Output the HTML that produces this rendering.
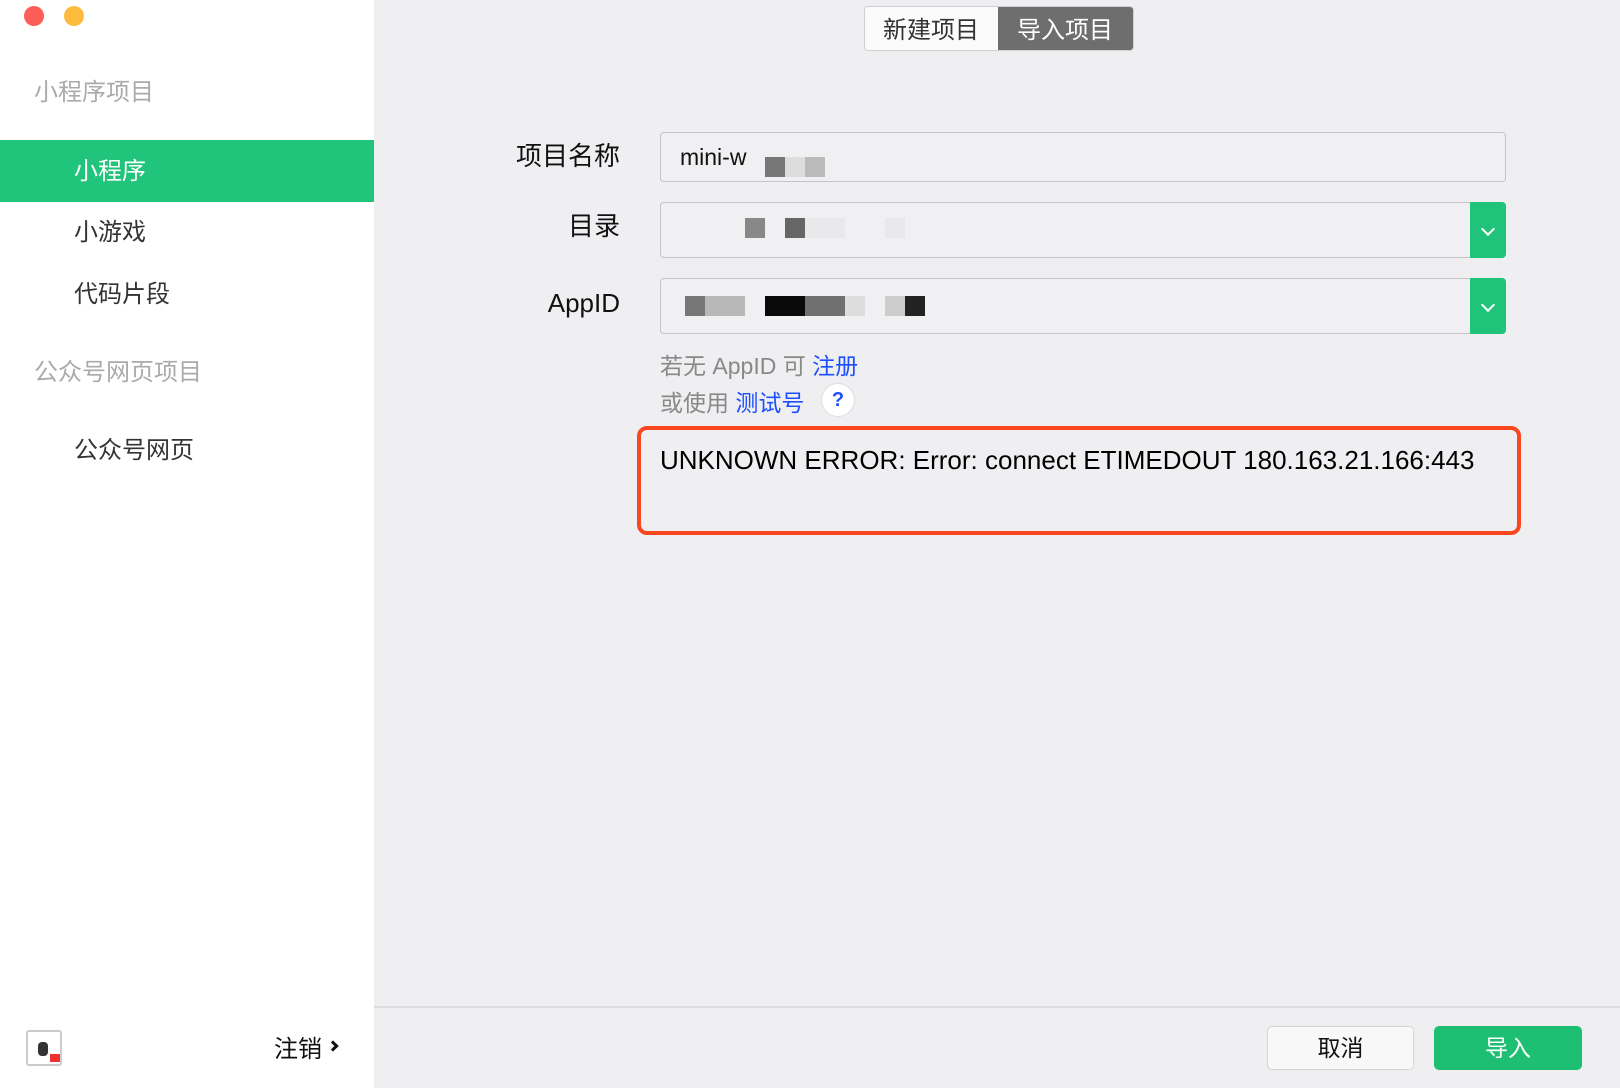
<!DOCTYPE html>
<html><head><meta charset="utf-8"><style>
*{margin:0;padding:0;box-sizing:border-box}
body{width:1620px;height:1088px;position:relative;background:#efeff2;font-family:"Liberation Sans","Noto Sans CJK SC",sans-serif;overflow:hidden}
.a{position:absolute;white-space:nowrap}
.side{position:absolute;left:0;top:0;width:374px;height:1088px;background:#fff}
.dot{position:absolute;width:20px;height:20px;border-radius:50%;top:6px}
.lbl{position:absolute;right:1000px;font-size:26px;color:#111;line-height:30px}
.box{position:absolute;left:660px;width:846px;border:1px solid #c4c4c6;border-radius:4px;background:#f0f0f2}
.gb{position:absolute;right:-1px;top:-1px;bottom:-1px;width:36px;background:#1fc47a;border-radius:0 4px 4px 0}
.gb:after{content:"";position:absolute;left:13px;top:50%;margin-top:-6px;width:8px;height:8px;border-right:2.5px solid #fff;border-bottom:2.5px solid #fff;transform:rotate(45deg)}
.px{position:absolute;height:20px}
</style></head><body>
<div class="side">
<div class="dot" style="left:24px;background:#fd5d57"></div>
<div class="dot" style="left:64px;background:#febb3b"></div>
<div class="a" style="left:34px;top:72px;font-size:24px;color:#aaa">小程序项目</div>
<div style="position:absolute;left:0;top:140px;width:374px;height:62px;background:#20c47a"></div>
<div class="a" style="left:74px;top:151px;font-size:24px;color:#fff">小程序</div>
<div class="a" style="left:74px;top:212px;font-size:24px;color:#333">小游戏</div>
<div class="a" style="left:74px;top:274px;font-size:24px;color:#333">代码片段</div>
<div class="a" style="left:34px;top:352px;font-size:24px;color:#aaa">公众号网页项目</div>
<div class="a" style="left:74px;top:430px;font-size:24px;color:#333">公众号网页</div>
<div style="position:absolute;left:26px;top:1030px;width:36px;height:36px;border:2px solid #ccc;border-radius:3px;background:#fff">
<div style="position:absolute;left:10px;top:10px;width:10px;height:14px;background:#333;border-radius:4px"></div>
<div style="position:absolute;left:22px;top:22px;width:10px;height:8px;background:#e33"></div></div>
<div class="a" style="left:274px;top:1029px;font-size:24px;color:#111">注销</div>
<div style="position:absolute;left:329px;top:1042px;width:8px;height:8px;border-right:3px solid #111;border-top:3px solid #111;transform:rotate(45deg)"></div>
</div>
<div style="position:absolute;left:864px;top:6px;width:270px;height:45px;border:1px solid #d0d0d2;border-radius:4px;background:#fbfbfb;overflow:hidden">
<div class="a" style="left:18px;top:3px;font-size:24px;color:#333">新建项目</div>
<div style="position:absolute;left:133px;top:0;right:0;bottom:0;background:#6e6e6e"></div>
<div class="a" style="left:152px;top:3px;font-size:24px;color:#fff">导入项目</div>
</div>
<div class="lbl" style="top:141px">项目名称</div>
<div class="lbl" style="top:211px">目录</div>
<div class="lbl" style="top:288px">AppID</div>
<div class="box" style="top:132px;height:50px"><div class="a" style="left:19px;top:11px;font-size:23px;color:#111">mini-w</div>
<div class="px" style="left:104px;top:24px;width:20px;background:#777"></div><div class="px" style="left:124px;top:24px;width:20px;background:#ddd"></div><div class="px" style="left:144px;top:24px;width:20px;background:#bbb"></div></div>
<div class="box" style="top:202px;height:56px"><div class="gb"></div>
<div class="px" style="left:84px;top:15px;width:20px;background:#888"></div><div class="px" style="left:124px;top:15px;width:20px;background:#666"></div><div class="px" style="left:144px;top:15px;width:40px;background:#e9e9eb"></div><div class="px" style="left:224px;top:15px;width:20px;background:#e9e9eb"></div></div>
<div class="box" style="top:278px;height:56px"><div class="gb"></div>
<div class="px" style="left:24px;top:17px;width:20px;background:#777"></div><div class="px" style="left:44px;top:17px;width:40px;background:#b8b8b8"></div>
<div class="px" style="left:104px;top:17px;width:40px;background:#0a0a0a"></div><div class="px" style="left:144px;top:17px;width:40px;background:#707070"></div><div class="px" style="left:184px;top:17px;width:20px;background:#ddd"></div>
<div class="px" style="left:224px;top:17px;width:20px;background:#ccc"></div><div class="px" style="left:244px;top:17px;width:20px;background:#222"></div></div>
<div class="a" style="left:660px;top:347px;font-size:23px;color:#888">若无 AppID 可 <span style="color:#1d4fff">注册</span></div>
<div class="a" style="left:660px;top:384px;font-size:23px;color:#888">或使用 <span style="color:#1d4fff">测试号</span></div>
<div style="position:absolute;left:821px;top:383px;width:34px;height:34px;border-radius:50%;background:#fff;border:1px solid #ddd;color:#1d4fff;font-size:20px;font-weight:bold;text-align:center;line-height:32px">?</div>
<div style="position:absolute;left:637px;top:426px;width:884px;height:109px;border:4px solid #fa4721;border-radius:10px"></div>
<div class="a" style="left:660px;top:445px;font-size:26px;color:#000">UNKNOWN ERROR: Error: connect ETIMEDOUT 180.163.21.166:443</div>
<div style="position:absolute;left:374px;top:1006px;width:1246px;height:2px;background:#dcdcde"></div>
<div style="position:absolute;left:1267px;top:1026px;width:147px;height:44px;border:1px solid #d4d4d6;border-radius:5px;background:#f8f8f8;text-align:center;font-size:23px;line-height:42px;color:#111">取消</div>
<div style="position:absolute;left:1434px;top:1026px;width:148px;height:44px;border-radius:5px;background:#1fbf73;text-align:center;font-size:23px;line-height:44px;color:#fff">导入</div>
</body></html>
